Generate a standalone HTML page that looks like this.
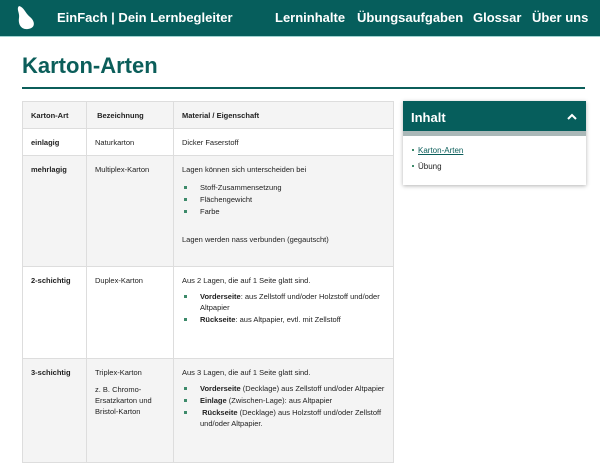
<!DOCTYPE html>
<html><head><meta charset="utf-8"><style>
*{margin:0;padding:0;box-sizing:border-box}
body{width:600px;height:468px;overflow:hidden;background:#fff;font-family:"Liberation Sans",sans-serif;color:#222;position:relative}
.hdr{position:absolute;left:0;top:0;width:600px;height:37px;background:#065e5c;border-bottom:1px solid #9fd3d0}
.hdr span{position:absolute;top:10px;color:#fff;font-weight:bold;font-size:13px;font-family:"Liberation Sans",sans-serif;white-space:nowrap}
h1{position:absolute;left:22px;top:53px;font-size:22px;color:#0b5e5a;font-family:"Liberation Sans",sans-serif;font-weight:bold}
.ul{position:absolute;left:22px;top:87px;width:563px;height:2px;background:#0b5e5a}
table{position:absolute;left:22px;top:101px;width:372px;border-collapse:collapse;font-size:7.5px;border:1px solid #ddd}
td{border:1px solid #ddd;vertical-align:top;padding:8px 8px 2px;line-height:11px}
tr.g td{background:#f4f4f4}
td b{font-weight:bold}
ul.l{list-style:none;margin-top:5px}
ul.l li{position:relative;padding-left:18px;margin-bottom:1px}
ul.l li:before{content:"";position:absolute;left:2px;top:4px;width:3px;height:3px;background:#3d8a6a}
.side{position:absolute;left:403px;top:101px;width:183px;height:84px;background:#fff;box-shadow:0 1px 4px rgba(0,0,0,.3)}
.sh{background:#065e5c;border-bottom:5px solid #aab8b8;color:#fff;font-weight:bold;font-size:13px;font-family:"Liberation Sans",sans-serif;padding:9px 0 0 8px;height:35px;position:relative}
.side ul{list-style:none;font-size:8px;margin:10px 0 0 9px}
.side li{margin-bottom:7px;position:relative;padding-left:6px}
.side li:before{content:"";position:absolute;left:0;top:3px;width:2px;height:2px;background:#3d8a6a}
</style></head><body>
<div class="hdr">
<svg style="position:absolute;left:16px;top:6px" width="22" height="24" viewBox="0 0 22 24"><path d="M3 0 C8 1 9 7 14 11 C19 15 20 22 12 23 C5 24 2 18 3 12 C4 7 0 3 3 0Z" fill="#fff"/></svg>
<span style="left:57px">EinFach | Dein Lernbegleiter</span>
<span style="left:275px">Lerninhalte</span>
<span style="left:357px">Übungsaufgaben</span>
<span style="left:473px">Glossar</span>
<span style="left:532px">Über uns</span>
</div>
<h1>Karton-Arten</h1>
<div class="ul"></div>
<table>
<tr class="g" style="height:27px"><td style="width:64px"><b>Karton-Art</b></td><td style="width:87px"><b>&nbsp;Bezeichnung</b></td><td><b>Material / Eigenschaft</b></td></tr>
<tr style="height:27px"><td><b>einlagig</b></td><td>Naturkarton</td><td>Dicker Faserstoff</td></tr>
<tr class="g" style="height:111px"><td><b>mehrlagig</b></td><td>Multiplex-Karton</td><td>Lagen können sich unterscheiden bei<ul class="l" style="margin-top:7px"><li>Stoff-Zusammensetzung</li><li>Flächengewicht</li><li>Farbe</li></ul><div style="margin-top:17px">Lagen werden nass verbunden (gegautscht)</div></td></tr>
<tr style="height:92px"><td><b>2-schichtig</b></td><td>Duplex-Karton</td><td>Aus 2 Lagen, die auf 1 Seite glatt sind.<ul class="l"><li><b>Vorderseite</b>: aus Zellstoff und/oder Holzstoff und/oder Altpapier</li><li><b>Rückseite</b>: aus Altpapier, evtl. mit Zellstoff</li></ul></td></tr>
<tr class="g" style="height:104px"><td><b>3-schichtig</b></td><td>Triplex-Karton<div style="margin-top:6px">z. B. Chromo-Ersatzkarton und Bristol-Karton</div></td><td>Aus 3 Lagen, die auf 1 Seite glatt sind.<ul class="l"><li><b>Vorderseite</b> (Decklage) aus Zellstoff und/oder Altpapier</li><li><b>Einlage</b> (Zwischen-Lage): aus Altpapier</li><li>&nbsp;<b>Rückseite</b> (Decklage) aus Holzstoff und/oder Zellstoff und/oder Altpapier.</li></ul></td></tr>
</table>
<div class="side"><div class="sh">Inhalt<svg style="position:absolute;right:9px;top:12px" width="10" height="7" viewBox="0 0 10 7"><path d="M1 6 L5 2 L9 6" stroke="#fff" stroke-width="2" fill="none"/></svg></div>
<ul><li><span style="color:#0b5e5a;text-decoration:underline">Karton-Arten</span></li><li>Übung</li></ul></div>
</body></html>
